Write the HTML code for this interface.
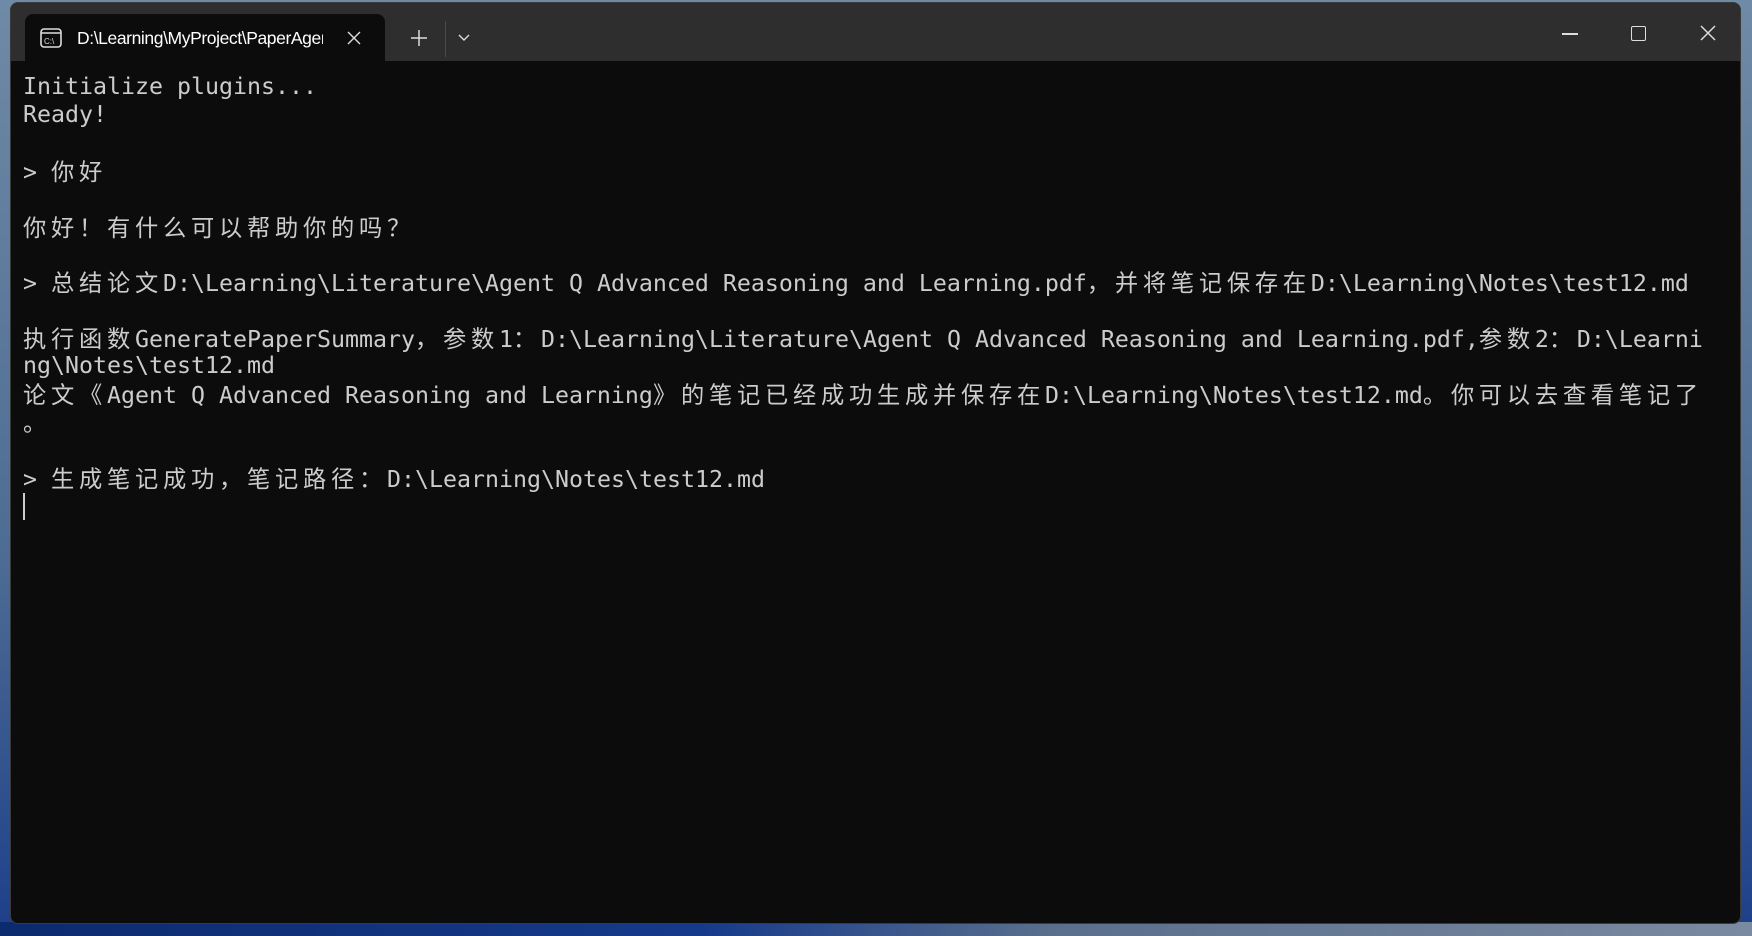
<!DOCTYPE html>
<html><head><meta charset="utf-8"><style>
*{margin:0;padding:0;box-sizing:border-box}
body{width:1752px;height:936px;overflow:hidden;background:linear-gradient(180deg,#6f8aa6 0%,#4d6c93 60%,#1d3f8a 100%);position:relative;font-family:"Liberation Sans","Noto Sans CJK SC",sans-serif}
.bottom{position:absolute;left:0;right:0;bottom:0;height:14px;background:linear-gradient(90deg,#0c2a6e,#163a8a 40%,#5a6f8c 60%,#7a8aa0)}
.win{position:absolute;left:10px;top:2px;width:1731px;height:922px;background:#0c0c0c;border-radius:8px;overflow:hidden;border:1px solid #3a3a3a}
.title{position:absolute;left:0;top:0;right:0;height:58px;background:#2e2e2e}
.tab{position:absolute;left:14px;top:11px;width:360px;height:48px;background:#0c0c0c;border-radius:8px 8px 0 0}
.tabtext{position:absolute;left:52px;top:14px;color:#fff;font-size:17.5px;white-space:nowrap;width:246px;overflow:hidden;letter-spacing:-0.4px}
.term{position:absolute;left:12px;top:70px;color:#cccccc;font-family:"DejaVu Sans Mono","Noto Sans CJK SC",monospace;font-size:23.25px;white-space:normal}
.term div{height:27.93px;line-height:27.93px;overflow:visible;white-space:pre}
.c{font-family:"Noto Sans CJK SC",sans-serif;letter-spacing:4.75px;line-height:27.93px}
</style></head><body>
<div class="bottom"></div>
<div class="win">
<div class="title">
<div class="tab">
<svg style="position:absolute;left:15px;top:14px" width="22" height="20" viewBox="0 0 22 20"><rect x="1" y="1" width="20" height="18" rx="3" fill="none" stroke="#ddd" stroke-width="1.6"/><line x1="1" y1="5" x2="21" y2="5" stroke="#ddd" stroke-width="1.4"/><text x="4" y="16" font-size="8" fill="#ddd" font-family="Liberation Sans">C:\</text></svg>
<div class="tabtext">D:\Learning\MyProject\PaperAgent</div>
<svg style="position:absolute;left:322px;top:17px" width="14" height="14"><path d="M1 1L13 13M13 1L1 13" stroke="#ddd" stroke-width="1.4"/></svg>
</div>
<svg style="position:absolute;left:399px;top:26px" width="18" height="18"><path d="M9 1V17M1 9H17" stroke="#ddd" stroke-width="1.5"/></svg>
<div style="position:absolute;left:434px;top:18px;width:1px;height:36px;background:#4a4a4a"></div>
<svg style="position:absolute;left:447px;top:31px" width="12" height="8"><path d="M1 1L6 6L11 1" stroke="#ddd" stroke-width="1.4" fill="none"/></svg>
<div style="position:absolute;left:1551px;top:30px;width:16px;height:1.5px;background:#ddd"></div>
<div style="position:absolute;left:1620px;top:23px;width:15px;height:15px;border:1.5px solid #ddd;border-radius:2px"></div>
<svg style="position:absolute;left:1689px;top:22px" width="16" height="16"><path d="M1 1L15 15M15 1L1 15" stroke="#ddd" stroke-width="1.5"/></svg>
</div>
<div class="term"><div>Initialize plugins...</div><div>Ready!</div><div></div><div>&gt; <span class="c">你好</span></div><div></div><div><span class="c">你好！有什么可以帮助你的吗？</span></div><div></div><div>&gt; <span class="c">总结论文</span>D:\Learning\Literature\Agent Q Advanced Reasoning and Learning.pdf<span class="c">，并将笔记保存在</span>D:\Learning\Notes\test12.md</div><div></div><div><span class="c">执行函数</span>GeneratePaperSummary<span class="c">，参数</span>1<span class="c">：</span>D:\Learning\Literature\Agent Q Advanced Reasoning and Learning.pdf,<span class="c">参数</span>2<span class="c">：</span>D:\Learni</div><div>ng\Notes\test12.md</div><div><span class="c">论文《</span>Agent Q Advanced Reasoning and Learning<span class="c">》的笔记已经成功生成并保存在</span>D:\Learning\Notes\test12.md<span class="c">。你可以去查看笔记了</span></div><div><span class="c">。</span></div><div></div><div>&gt; <span class="c">生成笔记成功，笔记路径：</span>D:\Learning\Notes\test12.md</div><div><span style="display:inline-block;width:2px;height:27px;background:#ccc;vertical-align:middle"></span></div></div>
</div>
</body></html>
